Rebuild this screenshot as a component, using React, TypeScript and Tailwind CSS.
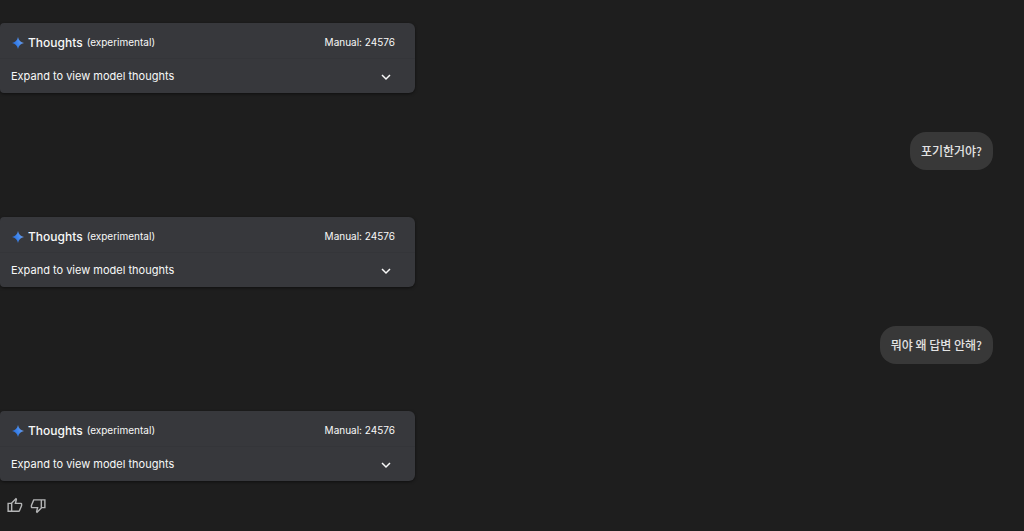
import { useState } from 'react'

const THUMB_PATH =
  'M720-120H280v-520l280-280 50 50q7 7 11.5 19t4.5 23v14l-44 174h258q32 0 56 24t24 56v80q0 7-2 15t-4 15L794-168q-9 20-30 34t-44 14Zm-360-80h360l120-280v-80H480l54-220-174 174v406Zm0-406v406-406Zm-80-34v80H160v360h120v80H80v-520h200Z'

type Message = { role: 'user'; text: string } | { role: 'model'; budget: number }

const messages: Message[] = [
  { role: 'model', budget: 24576 },
  { role: 'user', text: '포기한거야?' },
  { role: 'model', budget: 24576 },
  { role: 'user', text: '뭐야 왜 답변 안해?' },
  { role: 'model', budget: 24576 },
]

function Sparkle() {
  return (
    <svg viewBox="0 0 24 24" className="h-3 w-3 shrink-0" aria-hidden="true">
      <defs>
        <linearGradient id="sparkle" x1="0" y1="0.7" x2="1" y2="0.3">
          <stop offset="0" stopColor="#2668d8" />
          <stop offset="0.5" stopColor="#3f86ec" />
          <stop offset="1" stopColor="#7aa5ee" />
        </linearGradient>
      </defs>
      <path d="M12 0C13.2 6.5 17.5 10.8 24 12C17.5 13.2 13.2 17.5 12 24C10.8 17.5 6.5 13.2 0 12C6.5 10.8 10.8 6.5 12 0Z" fill="url(#sparkle)" />
    </svg>
  )
}

function ThoughtsCard({ budget }: { budget: number }) {
  const [open, setOpen] = useState(false)

  return (
    <section className="w-full max-w-[415px] rounded-l-sm rounded-r-md bg-[#37383c] text-[11px] text-[#f8f8f8] shadow-[0_1px_3px_rgba(0,0,0,0.5)]">
      <div className="flex h-9 items-center justify-between border-b border-[#343539] pt-1 pr-5 pl-3">
        <h2 className="flex items-center">
          <Sparkle />
          <span className="ml-1 text-xs font-medium">Thoughts</span>
          <span className="ml-1 text-[10px]">(experimental)</span>
        </h2>
        <span className="text-[10px]">Manual: {budget}</span>
      </div>
      <button
        type="button"
        aria-expanded={open}
        onClick={() => setOpen(!open)}
        className="flex h-[34px] w-full items-center justify-between pt-px pr-6 pl-[11px] text-left"
      >
        Expand to view model thoughts
        <svg viewBox="0 0 10 10" className="h-[10px] w-[10px]" fill="none" stroke="currentColor" strokeWidth="1.5" aria-hidden="true">
          <path d="M1 3L5 7L9 3" />
        </svg>
      </button>
    </section>
  )
}

function UserBubble({ text }: { text: string }) {
  return (
    <div className="mt-[39px] mb-[47px] flex justify-end pr-[31px]">
      <p className="flex h-[38px] items-center rounded-2xl bg-[#383838] px-[11px] font-['Noto_Sans_CJK_KR',sans-serif] text-xs font-medium text-[#e3e3e3]">
        {text}
      </p>
    </div>
  )
}

export default function App() {
  return (
    <main className="min-h-screen overflow-hidden bg-[#1e1e1e] pt-[23px] font-['Inter','Noto_Sans_CJK_KR',sans-serif]">
      {messages.map((message, index) =>
        message.role === 'model' ? (
          <ThoughtsCard key={index} budget={message.budget} />
        ) : (
          <UserBubble key={index} text={message.text} />
        )
      )}
      <div className="mt-4 flex gap-[7px] pl-[6px] text-[#b4b5b6]">
        <button type="button" aria-label="Good response">
          <svg viewBox="0 -960 960 960" className="h-[17px] w-[17px]" fill="currentColor">
            <path d={THUMB_PATH} />
          </svg>
        </button>
        <button type="button" aria-label="Bad response">
          <svg viewBox="0 -960 960 960" className="h-[17px] w-[17px] rotate-180" fill="currentColor">
            <path d={THUMB_PATH} />
          </svg>
        </button>
      </div>
    </main>
  )
}
